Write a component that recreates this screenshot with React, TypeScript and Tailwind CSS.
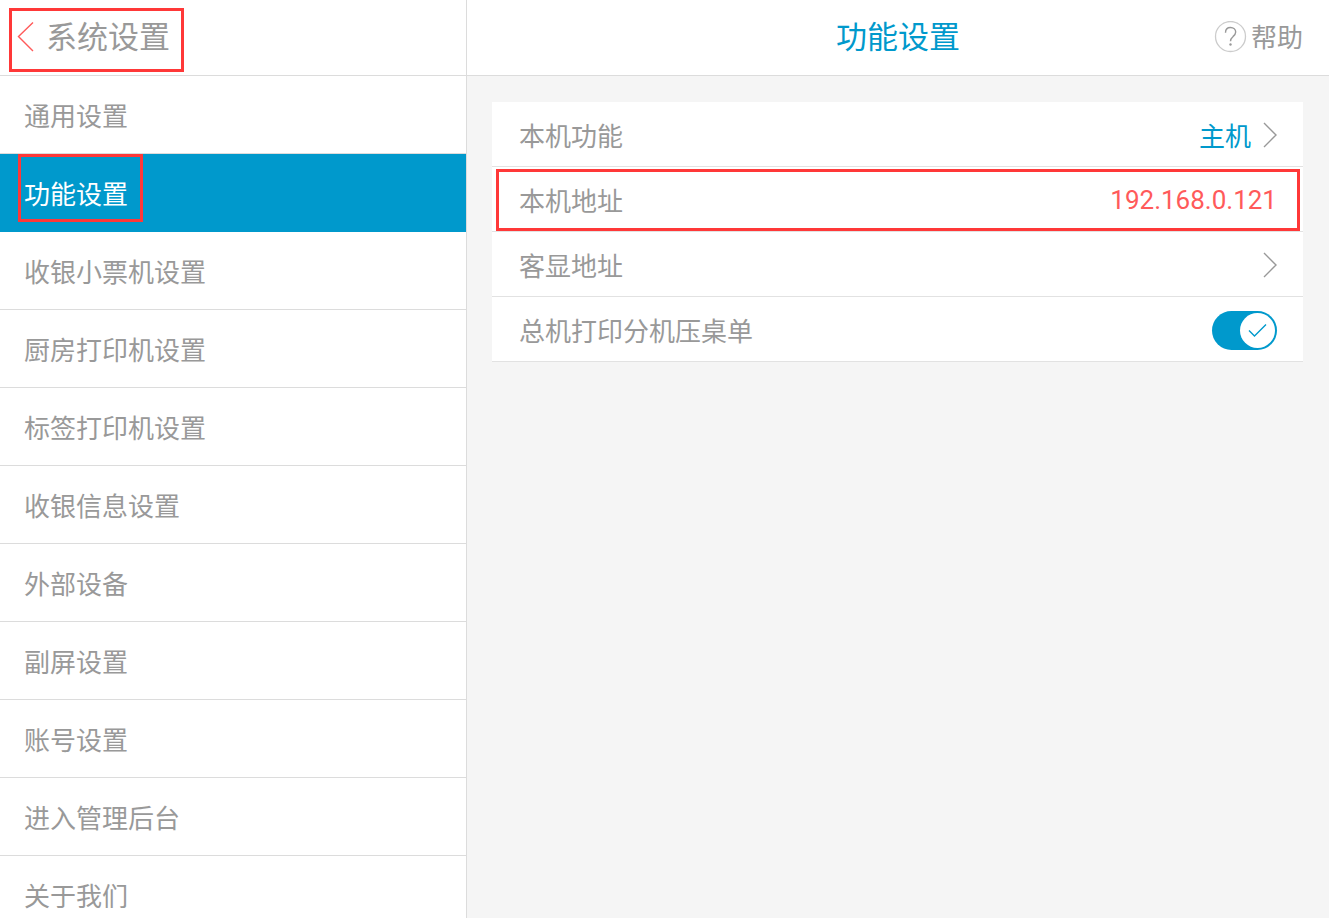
import { useState } from "react";
import type { ReactNode } from "react";

const menuItems = [
  "通用设置",
  "功能设置",
  "收银小票机设置",
  "厨房打印机设置",
  "标签打印机设置",
  "收银信息设置",
  "外部设备",
  "副屏设置",
  "账号设置",
  "进入管理后台",
  "关于我们",
];

function Chevron() {
  return (
    <svg width="14" height="26" viewBox="0 0 14 26" fill="none" stroke="#999999" strokeWidth="1.4" aria-hidden="true">
      <path d="M1 1L13 13L1 25" />
    </svg>
  );
}

function Row({ children }: { children: ReactNode }) {
  return (
    <div className="relative flex h-[65px] items-center justify-between border-b border-[#e2e2e2] pl-[27px] pr-[26px] pt-0.5">
      {children}
    </div>
  );
}

function Highlight({ className }: { className: string }) {
  return <span aria-hidden="true" className={`pointer-events-none absolute z-10 border-3 border-[#ff3838] ${className}`} />;
}

export default function App() {
  const [active, setActive] = useState("功能设置");
  const [printOn, setPrintOn] = useState(true);

  return (
    <div className="flex h-screen overflow-hidden bg-[#f5f5f5] font-['Roboto','Noto_Sans_CJK_SC',sans-serif] text-[26px] leading-8 text-[#999999]">
      <aside className="flex w-[467px] shrink-0 flex-col border-r border-[#dcdcdc] bg-white">
        <header className="relative flex h-[76px] shrink-0 items-center border-b border-[#dcdcdc] pl-4">
          <button type="button" className="flex items-center gap-3">
            <svg width="18" height="32" viewBox="0 0 18 32" fill="none" stroke="#ff5a5a" strokeWidth="1.4" aria-hidden="true">
              <path d="M17 0.5L2.5 14.5L17 29" />
            </svg>
            <span className="text-[31px]">系统设置</span>
          </button>
          <Highlight className="left-[9px] top-2 h-16 w-[175px]" />
        </header>
        <nav>
          <ul>
            {menuItems.map((item) => (
              <li
                key={item}
                className={`relative h-[78px] border-b ${
                  item === active ? "border-[#0099cc] bg-[#0099cc] text-white" : "border-[#dcdcdc]"
                }`}
              >
                <button type="button" onClick={() => setActive(item)} className="h-full w-full pl-6 pt-1 text-left">
                  {item}
                </button>
                {item === "功能设置" && <Highlight className="left-[18px] top-0 h-[68px] w-[125px]" />}
              </li>
            ))}
          </ul>
        </nav>
      </aside>

      <main className="flex min-w-0 flex-1 flex-col">
        <header className="grid h-[76px] shrink-0 grid-cols-[1fr_auto_1fr] items-center border-b border-[#dcdcdc] bg-white">
          <h1 className="col-start-2 text-[31px] text-[#0099cc]">功能设置</h1>
          <button type="button" className="mr-[26px] flex items-center gap-1 justify-self-end">
            <svg width="34" height="34" viewBox="0 0 34 34" fill="none" aria-hidden="true">
              <circle cx="17.5" cy="15.5" r="15" stroke="#cccccc" strokeWidth="1.3" />
              <path
                d="M12.5 11.7C12.5 8.4 14.5 6.5 17.5 6.5C20.5 6.5 22.7 8.5 22.7 11.1C22.7 13.3 21.4 14.4 19.9 15.7C18.3 17 17.5 18 17.5 20.3"
                stroke="#999999"
                strokeWidth="1.4"
              />
              <circle cx="17.5" cy="23.5" r="1.2" fill="#999999" />
            </svg>
            <span>帮助</span>
          </button>
        </header>

        <section className="ml-[25px] mr-[26px] mt-[26px] bg-white">
          <Row>
            <span className="pt-1">本机功能</span>
            <button type="button" className="flex items-center gap-3 text-[#0099cc]">
              <span className="pt-1">主机</span>
              <Chevron />
            </button>
          </Row>
          <Row>
            <span className="pt-1">本机地址</span>
            <span className="text-[#ff5a5a]">192.168.0.121</span>
            <Highlight className="bottom-0 left-1 right-[3px] top-[2px]" />
          </Row>
          <Row>
            <span className="pt-1">客显地址</span>
            <button type="button" aria-label="客显地址">
              <Chevron />
            </button>
          </Row>
          <Row>
            <label htmlFor="print-switch" className="pt-1">
              总机打印分机压桌单
            </label>
            <span className="relative flex h-[39px] w-[65px]">
              <input
                id="print-switch"
                type="checkbox"
                role="switch"
                checked={printOn}
                onChange={(e) => setPrintOn(e.target.checked)}
                className="peer h-full w-full cursor-pointer appearance-none rounded-full bg-[#cccccc] checked:bg-[#0099cc]"
              />
              <span className="pointer-events-none absolute left-[2px] top-[2px] flex size-[35px] items-center justify-center rounded-full bg-white peer-checked:left-7">
                <svg width="19" height="15" viewBox="0 0 19 15" fill="none" stroke="#0099cc" strokeWidth="1.4" aria-hidden="true">
                  <path d="M1 7.5L6.5 13L18 1.5" />
                </svg>
              </span>
            </span>
          </Row>
        </section>
      </main>
    </div>
  );
}
